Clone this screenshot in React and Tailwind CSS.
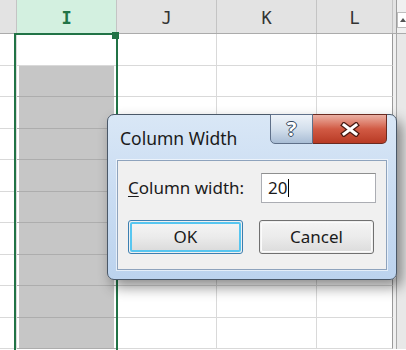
const rowHeights = [32, 31, 32, 31, 32, 31, 32, 31, 32, 31];

function Cell({ w, children, className = "" }) {
  return <div className={`${w} h-full border-r border-b border-[#d9d9d9] ${className}`}>{children}</div>;
}

export default function App() {
  return (
    <div className="relative w-[406px] h-[350px] overflow-hidden bg-white">
      <div className="flex">
        {/* sheet */}
        <div className="w-[393px] flex flex-col">
          <div className="flex h-[34px] border-b border-[#ababab] bg-[#e3e3e3] text-[17px] text-[#333] font-['DejaVu_Sans_Mono',monospace]">
            <div className="w-[17px] border-r border-[#c4c4c4]" />
            <div className="w-[100px] border-r border-[#c4c4c4] bg-[#d3f0e0] text-[#217346] font-bold flex items-center justify-center pt-[5px]">I</div>
            <div className="w-[100px] border-r border-[#c4c4c4] flex items-center justify-center pt-[5px]">J</div>
            <div className="w-[100px] border-r border-[#c4c4c4] flex items-center justify-center pt-[5px]">K</div>
            <div className="w-[76px] border-r border-[#c4c4c4] flex items-center justify-center pt-[5px]">L</div>
          </div>
          {rowHeights.map((h, i) => (
            <div key={i} className="flex" style={{ height: h }}>
              <Cell w="w-[17px]" />
              <Cell w="w-[100px]" className={i > 0 ? "border-b-[#adadad] px-[2px]" : ""}>
                {i > 0 && <div className="h-full bg-[#c6c6c6]" />}
              </Cell>
              <Cell w="w-[100px]" />
              <Cell w="w-[100px]" />
              <Cell w="w-[76px]" className="border-r-[#9a9a9a]" />
            </div>
          ))}
        </div>
        {/* scrollbar */}
        <div className="w-[13px] flex flex-col">
          <div className="h-[34px] flex bg-[#e3e3e3] border-b border-[#ababab]">
            <div className="w-[3px]" />
            <div className="flex-1 border-l border-[#9e9e9e] bg-[#f0f0f0] pt-[12px]">
              <div className="h-[16px] border border-[#bdbdbd] border-r-0 bg-white flex items-center justify-center pl-[2px]">
                <svg width="6" height="4" viewBox="0 0 6 4">
                  <path d="M0 4 L3 0 L6 4 Z" fill="#555" />
                </svg>
              </div>
            </div>
          </div>
          <div className="flex-1 flex h-[320px]">
            <div className="w-[3px] bg-[#f0f0f0]" />
            <div className="flex-1 border-l border-[#a8a8a8] bg-[#e8e8e8]" />
          </div>
        </div>
      </div>

      {/* selection border */}
      <div className="absolute left-[14px] top-[33px] w-[104px] h-[330px] border-2 border-[#217346]" />
      <div className="absolute left-[112px] top-[32px] w-[7px] h-[7px] bg-[#217346]" />

      {/* dialog */}
      <div className="absolute left-[107px] top-[114px] w-[290px] h-[166px] rounded-[7px] border border-[#4a5868] bg-gradient-to-b from-[#d9e7f6] via-[#c9dcf2] to-[#bcd3ee] shadow-[5px_7px_14px_rgba(0,0,0,0.45)] flex flex-col font-['Noto_Sans',sans-serif]">
        <div className="relative h-[45px] shrink-0">
          <div className="absolute left-[12px] top-[10px] text-[17.5px] text-[#1b1b1b]">Column Width</div>
          <div className="absolute right-[9px] -top-px flex h-[30px]">
            <div className="w-[43px] rounded-bl-[5px] border border-[#5f7089] bg-gradient-to-b from-[#eef3f9] via-[#d3dfec] to-[#a9bdd5] flex items-center justify-center">
              <span className="text-[20px] font-bold text-white leading-none [text-shadow:-1px_0_#34475e,1px_0_#34475e,0_-1px_#34475e,0_1px_#34475e]">?</span>
            </div>
            <div className="w-[74px] rounded-br-[5px] border border-l-0 border-[#6a2a20] bg-gradient-to-b from-[#eab0a4] via-[#d15a44] to-[#b83a24] flex items-center justify-center">
              <svg width="22" height="15" viewBox="0 0 22 15">
                <path d="M5 3 L17 12 M17 3 L5 12" stroke="#4a1a12" strokeWidth="5.5" strokeLinecap="square" />
                <path d="M5 3 L17 12 M17 3 L5 12" stroke="#ffffff" strokeWidth="3" strokeLinecap="square" />
              </svg>
            </div>
          </div>
        </div>
        <div className="flex-1 mx-[9px] mb-[9px] border border-[#8ea3bd] bg-[#f0f0f0] px-[10px] pt-[12px] shadow-[0_0_0_1px_rgba(255,255,255,0.6)]">
          <div className="flex items-center">
            <div className="w-[133px] text-[17px] text-[#1b1b1b]">
              <span className="underline underline-offset-2">C</span>olumn width:
            </div>
            <div className="w-[115px] h-[30px] border border-[#abadb3] border-t-[#8e8f8f] bg-white flex items-center pl-[6px] text-[17px] text-[#1b1b1b]">
              20<span className="ml-[1px] w-px h-[18px] bg-black" />
            </div>
          </div>
          <div className="flex gap-[16px] mt-[17px]">
            <div className="w-[115px] h-[34px] rounded-[3px] border border-[#3c7fb1] p-px">
              <div className="h-full rounded-[2px] border-2 border-[#57c6f0] bg-gradient-to-b from-[#f4f4f4] via-[#ebebeb] to-[#dcdcdc] flex items-center justify-center text-[17px] text-[#1b1b1b]">OK</div>
            </div>
            <div className="w-[115px] h-[34px] rounded-[3px] border border-[#707070] p-px">
              <div className="h-full rounded-[2px] border border-[#fbfbfb] bg-gradient-to-b from-[#f3f3f3] via-[#ebebeb] to-[#dddddd] flex items-center justify-center text-[17px] text-[#1b1b1b]">Cancel</div>
            </div>
          </div>
        </div>
      </div>
    </div>
  );
}
